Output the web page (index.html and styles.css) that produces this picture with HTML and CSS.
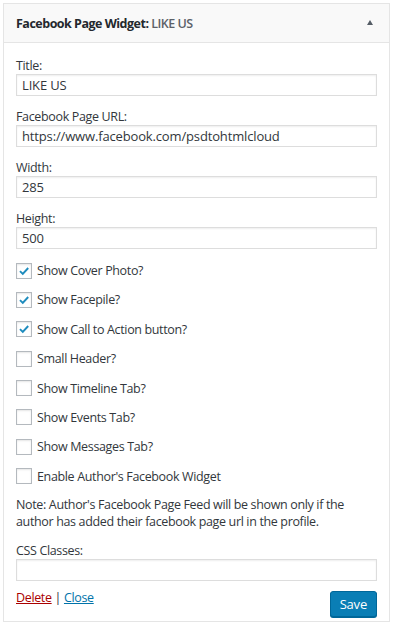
FILE: index.html
```html
<!DOCTYPE html>
<html lang="en">
<head>
<meta charset="UTF-8">
<title>Facebook Page Widget</title>
<link rel="stylesheet" href="styles.css">
</head>
<body>
<div class="widget">
  <div class="widget-top">
    <h3 class="widget-title">Facebook Page Widget: <span class="in-title">LIKE US</span></h3>
    <span class="toggle"></span>
  </div>
  <div class="widget-inside">
    <p class="field">
      <label>Title:</label>
      <input type="text" class="text" value="LIKE US">
    </p>
    <p class="field">
      <label>Facebook Page URL:</label>
      <input type="text" class="text" value="https://www.facebook.com/psdtohtmlcloud">
    </p>
    <p class="field">
      <label>Width:</label>
      <input type="text" class="text" value="285">
    </p>
    <p class="field">
      <label>Height:</label>
      <input type="text" class="text" value="500">
    </p>

    <p class="check"><span class="box on"><svg viewBox="0 0 16 16"><path d="M3.4 8.2 L6.6 11.3 L12.8 4.6"/></svg></span>Show Cover Photo?</p>
    <p class="check"><span class="box on"><svg viewBox="0 0 16 16"><path d="M3.4 8.2 L6.6 11.3 L12.8 4.6"/></svg></span>Show Facepile?</p>
    <p class="check"><span class="box on"><svg viewBox="0 0 16 16"><path d="M3.4 8.2 L6.6 11.3 L12.8 4.6"/></svg></span>Show Call to Action button?</p>
    <p class="check"><span class="box"></span>Small Header?</p>
    <p class="check"><span class="box"></span>Show Timeline Tab?</p>
    <p class="check"><span class="box"></span>Show Events Tab?</p>
    <p class="check"><span class="box"></span>Show Messages Tab?</p>
    <p class="check"><span class="box"></span>Enable Author's Facebook Widget</p>

    <p class="note">Note: Author's Facebook Page Feed will be shown only if the author has added their facebook page url in the profile.</p>

    <p class="field">
      <label>CSS Classes:</label>
      <input type="text" class="text" value="">
    </p>

    <div class="actions">
      <div class="links"><a href="#" class="delete">Delete</a> | <a href="#" class="close">Close</a></div>
      <button class="save">Save</button>
    </div>
  </div>
</div>
</body>
</html>
```

FILE: styles.css
```css
body {
  margin: 0;
  background: #fff;
  font-family: "Open Sans", "Noto Sans", sans-serif;
  font-size: 12.5px;
  letter-spacing: -0.35px;
  color: #32373c;
}

.widget {
  margin: 3px 7px 0 3px;
  border: 1px solid #e5e5e5;
  background: #fff;
}

.widget-top {
  display: flex;
  align-items: center;
  justify-content: space-between;
  height: 38px;
  padding: 0 16px 0 12px;
  background: #f9f9f9;
  border-bottom: 1px solid #e5e5e5;
}

.widget-title {
  margin: 0;
  font-size: 12.5px;
  font-weight: 700;
  color: #23282d;
  letter-spacing: -0.5px;
}

.in-title {
  color: #5c6168;
  font-weight: 600;
}

.toggle {
  width: 0;
  height: 0;
  margin-top: -2px;
  border-left: 3px solid transparent;
  border-right: 3px solid transparent;
  border-bottom: 5px solid #555d66;
}

.widget-inside {
  padding: 2px 12px 4px 12px;
}

.field {
  margin: 13px 0;
}

.field label {
  display: block;
  line-height: 16px;
  color: #32373c;
}

.text {
  display: block;
  box-sizing: border-box;
  width: 100%;
  height: 22px;
  margin: 0;
  padding: 0 5px;
  border: 1px solid #ddd;
  box-shadow: inset 0 1px 2px rgba(0, 0, 0, 0.07);
  font-family: inherit;
  font-size: 13px;
  letter-spacing: -0.15px;
  color: #32373c;
  outline: none;
}

.check {
  display: flex;
  align-items: center;
  margin: 12.4px 0;
  height: 17px;
}

.box {
  box-sizing: border-box;
  width: 16px;
  height: 16px;
  margin-right: 5px;
  border: 1px solid #b4b9be;
  box-shadow: inset 0 1px 2px rgba(0, 0, 0, 0.1);
  background: #fff;
}

.box svg {
  display: block;
  width: 14px;
  height: 14px;
}

.box svg path {
  fill: none;
  stroke: #1e8cbe;
  stroke-width: 2.2;
}

.note {
  margin: 12px 0;
  line-height: 16.5px;
}

.actions {
  display: flex;
  justify-content: space-between;
  align-items: flex-start;
  margin-top: -5px;
}

.links {
  line-height: 17px;
  color: #32373c;
}

.delete {
  color: #a00;
}

.close {
  color: #0073aa;
}

.save {
  margin-top: 2px;
  height: 26px;
  padding: 0 9px;
  border: 1px solid #006799;
  border-radius: 3px;
  background: #0a7eb5;
  color: #fff;
  font-family: inherit;
  font-size: 13px;
  letter-spacing: -0.2px;
  line-height: 24px;
  box-shadow: 0 1px 0 #006799;
}
```
